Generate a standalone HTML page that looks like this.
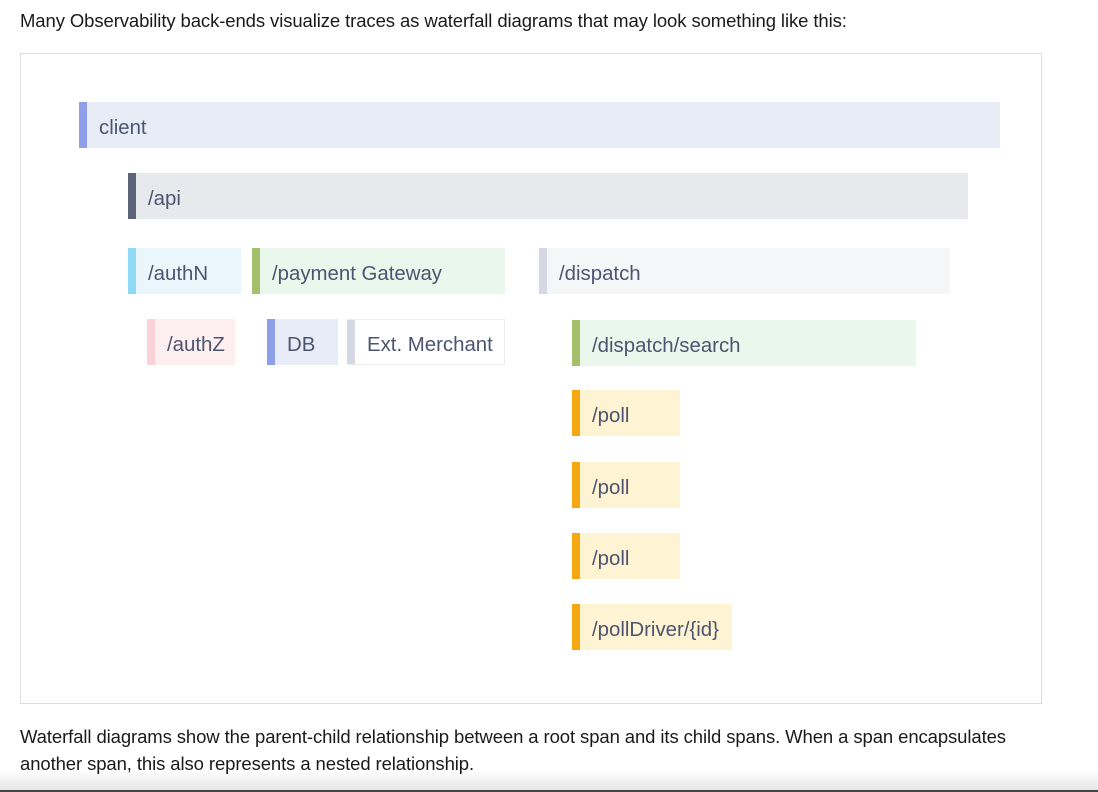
<!DOCTYPE html>
<html><head><style>
body{margin:0;width:1098px;height:792px;background:#fff;overflow:hidden;position:relative;font-family:"Liberation Sans",sans-serif;color:#1a1a1a}
.t{position:absolute;left:20px;font-size:18.5px;letter-spacing:-0.1px;white-space:nowrap}
.frame{position:absolute;left:20px;top:53px;width:1020px;height:649px;border:1px solid #dedede}
.b{position:absolute;height:46px;box-sizing:border-box;font-size:20.4px;color:#4c5470;line-height:52px;padding-left:20px;white-space:nowrap;overflow:hidden}
.b::before{content:"";position:absolute;left:0;top:0;bottom:0;width:8px;background:var(--s)}
.shade{position:absolute;left:0;right:0;bottom:0;height:22px;background:linear-gradient(#fff,#e4e4e4)}
.line{position:absolute;left:0;right:0;bottom:0;height:2px;background:#444}
</style></head><body>
<div class="t" style="top:10px">Many Observability back-ends visualize traces as waterfall diagrams that may look something like this:</div>
<div class="frame"></div>
<div class="b" style="left:79px;top:102px;width:921px;background:#e8ecf7;--s:#8f9ee8">client</div>
<div class="b" style="left:128px;top:173px;width:840px;background:#e8e9ec;--s:#5a6378">/api</div>
<div class="b" style="left:128px;top:248px;width:113px;background:#e9f6fb;--s:#8fd8f6">/authN</div>
<div class="b" style="left:252px;top:248px;width:253px;background:#eaf7ec;--s:#a4c06a">/payment Gateway</div>
<div class="b" style="left:539px;top:248px;width:411px;background:#f4f6f8;--s:#d5d8e2">/dispatch</div>
<div class="b" style="left:147px;top:319px;width:88px;background:#fdeff0;--s:#fbd3d6">/authZ</div>
<div class="b" style="left:267px;top:319px;width:71px;background:#e8ecf7;--s:#8f9ee8">DB</div>
<div class="b" style="left:347px;top:319px;width:158px;background:#fff;border:1px solid #ececec;border-left:none;line-height:50px;--s:#d5d8e2">Ext. Merchant</div>
<div class="b" style="left:572px;top:320px;width:344px;background:#eaf7ec;--s:#a4c06a">/dispatch/search</div>
<div class="b" style="left:572px;top:390px;width:108px;background:#fef3d2;--s:#f6a813">/poll</div>
<div class="b" style="left:572px;top:462px;width:108px;background:#fef3d2;--s:#f6a813">/poll</div>
<div class="b" style="left:572px;top:533px;width:108px;background:#fef3d2;--s:#f6a813">/poll</div>
<div class="b" style="left:572px;top:604px;width:160px;background:#fef3d2;--s:#f6a813">/pollDriver/{id}</div>
<div class="shade"></div><div class="line"></div>
<div class="t" style="top:723px;line-height:27px">Waterfall diagrams show the parent-child relationship between a root span and its child spans. When a span encapsulates<br>another span, this also represents a nested relationship.</div>
</body></html>
